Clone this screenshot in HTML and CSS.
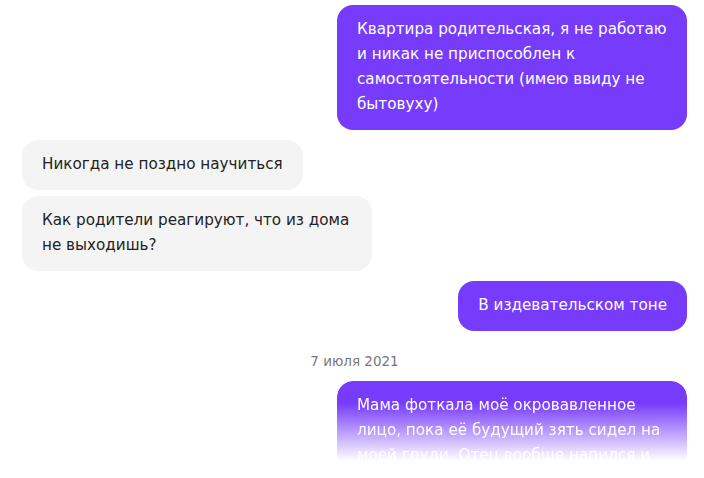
FILE: index.html
```html
<!DOCTYPE html>
<html lang="ru">

<head>
    <meta charset="UTF-8">
    <meta name="viewport" content="width=device-width, initial-scale=1.0">
    <title>Чат</title>
    <link rel="stylesheet" href="styles.css">
</head>

<body>
    <div class="chat">
        <div class="message out">Квартира родительская, я не работаю и никак не приспособлен к самостоятельности (имею ввиду не бытовуху)</div>

        <div class="group">
            <div class="message in">Никогда не поздно научиться</div>
            <div class="message in">Как родители реагируют, что из дома не выходишь?</div>
        </div>

        <div class="message out">В издевательском тоне</div>

        <div class="date">7 июля 2021</div>

        <div class="message out faded">Мама фоткала моё окровавленное лицо, пока её будущий зять сидел на моей груди. Отец вообще напился и уснул</div>
    </div>
</body>

</html>
```

FILE: styles.css
```css
body {
    margin: 0;
    padding: 0;
    background: #fff;
    font-family: "DejaVu Sans", sans-serif;
}

.chat {
    display: flex;
    flex-direction: column;
    gap: 10px;
    padding: 5px 17px 0 22px;
    height: 478px;
    box-sizing: border-box;
    overflow: hidden;
}

.group {
    display: flex;
    flex-direction: column;
    gap: 6px;
}

.message {
    max-width: 350px;
    box-sizing: border-box;
    padding: 12px 20px 13px;
    border-radius: 16px;
    font-size: 15.2px;
    line-height: 25px;
}

.message.out {
    align-self: flex-end;
    background-color: #773bfb;
    color: #fff;
}

.message.in {
    align-self: flex-start;
    background-color: #f4f4f4;
    color: #222;
}

/* last message fades out at the bottom edge */
.message.faded {
    flex-shrink: 0;
    -webkit-mask-image: linear-gradient(to bottom, #000 22px, transparent 80px);
    mask-image: linear-gradient(to bottom, #000 22px, transparent 80px);
}

.date {
    text-align: center;
    color: #777;
    font-size: 13.5px;
    line-height: 20px;
    margin-top: 10px;
}
```
